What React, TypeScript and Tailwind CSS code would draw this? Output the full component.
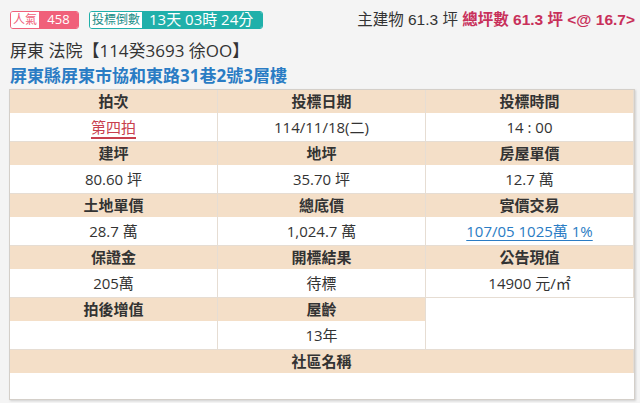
import React from "react";

const F = { fontFamily: '"Open Sans", "Noto Sans CJK TC", sans-serif' };

function H({ children, span }: { children?: React.ReactNode; span?: string }) {
  return (
    <div className={`h-[23px] bg-[#f4dfc8] flex items-center justify-center text-[15px] font-bold text-[#333] border-r border-[#e6ddd3] ${span ?? ""}`}>
      {children}
    </div>
  );
}
function D({ children, span }: { children?: React.ReactNode; span?: string }) {
  return (
    <div className={`h-[29px] bg-white flex items-center justify-center text-[15px] text-[#333] border-r border-b border-[#e6ddd3] ${span ?? ""}`}>
      {children}
    </div>
  );
}

export default function App() {
  return (
    <div className="w-[640px] h-[403px] overflow-hidden bg-[#f4f4f4] px-[9px]" style={F}>
      <div className="flex items-center justify-between pt-[10px] h-[29px] mr-[-4px]">
        <div className="flex items-center gap-[10px] pl-[1px]">
          <div className="flex h-[18px] rounded-[3px] overflow-hidden border border-[#f0607a]">
            <span className="bg-white text-[#f0607a] text-[12px] w-[28px] whitespace-nowrap flex items-center justify-center leading-none">人氣</span>
            <span className="bg-[#f0607a] text-white text-[13px] flex items-center justify-center leading-none w-[39px]">458</span>
          </div>
          <div className="flex h-[18px] rounded-[3px] overflow-hidden border border-[#20b0aa]">
            <span className="bg-white text-[#1a8e88] text-[12px] w-[52px] whitespace-nowrap flex items-center justify-center leading-none">投標倒數</span>
            <span className="bg-[#20b0aa] text-white text-[15px] whitespace-nowrap flex items-center leading-none pl-[7px] pr-[9px]">13天 03時 24分</span>
          </div>
        </div>
        <div className="text-[15.5px] text-[#333] whitespace-nowrap" style={{ fontFamily: '"Liberation Sans", "Noto Sans CJK TC", sans-serif' }}>
          主建物 61.3 坪 <span className="text-[#c8305a] font-bold">總坪數 61.3 坪 &lt;@ 16.7&gt;</span>
        </div>
      </div>
      <div className="mt-[12px] text-[17px] leading-[20px] text-[#333] pl-[1px]">屏東 法院【114癸3693 徐OO】</div>
      <div className="mt-[5px] text-[17px] leading-[20px] font-bold text-[#2a7cc4] pl-[1px]">屏東縣屏東市協和東路31巷2號3層樓</div>
      <div className="mt-[3px] w-[626px] border border-[#d4cfc9] shadow-[1px_1px_2px_rgba(0,0,0,0.15)] grid grid-cols-3 bg-white">
        <H>拍次</H><H>投標日期</H><H>投標時間</H>
        <D><span className="text-[#c8404e] underline decoration-[2px] underline-offset-[4px] decoration-[#c8404e]">第四拍</span></D>
        <D>114/11/18(二)</D>
        <D>14 : 00</D>
        <H>建坪</H><H>地坪</H><H>房屋單價</H>
        <D>80.60 坪</D><D>35.70 坪</D><D>12.7 萬</D>
        <H>土地單價</H><H>總底價</H><H>實價交易</H>
        <D>28.7 萬</D><D>1,024.7 萬</D>
        <D><span className="text-[#2a7cc4] underline underline-offset-[3px]">107/05 1025萬 1%</span></D>
        <H>保證金</H><H>開標結果</H><H>公告現值</H>
        <D>205萬</D><D>待標</D><D>14900 元/㎡</D>
        <H>拍後增值</H><H>屋齡</H>
        <div className="row-span-2 bg-white border-b border-[#e6ddd3]"></div>
        <D></D><D>13年</D>
        <H span="col-span-3">社區名稱</H>
        <div className="col-span-3 h-[26px] bg-white"></div>
      </div>
    </div>
  );
}
